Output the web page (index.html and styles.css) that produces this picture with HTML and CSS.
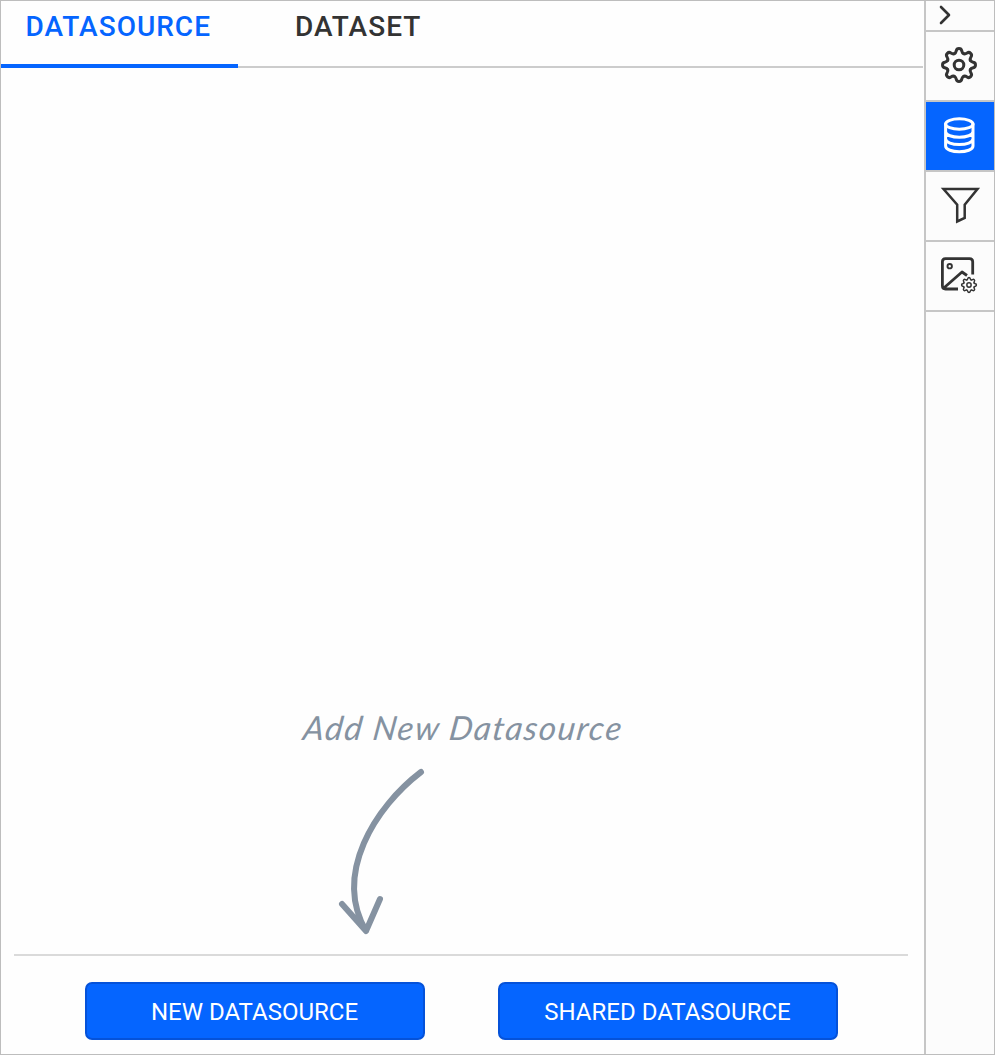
FILE: index.html
```html
<!DOCTYPE html>
<html lang="en">
<head>
<meta charset="utf-8">
<title>Datasource</title>
<link rel="stylesheet" href="styles.css">
</head>
<body>
<div class="app">
  <main class="panel">
    <nav class="tabs">
      <a class="tab tab-active">DATASOURCE</a>
      <a class="tab">DATASET</a>
    </nav>
    <section class="empty">
      <svg class="hint" width="340" height="250" viewBox="0 0 340 250">
        <text class="hint-text" transform="translate(11 44) skewX(-8)" textLength="318" lengthAdjust="spacing">Add New Datasource</text>
        <path class="arrow" d="M130 76C84 111 42 178 75 235M51 208L75 235L89 203"/>
      </svg>
    </section>
    <footer class="actions">
      <button class="btn">NEW DATASOURCE</button>
      <button class="btn">SHARED DATASOURCE</button>
    </footer>
  </main>
  <aside class="rail">
    <div class="cell cell-toggle">
      <svg class="icon" width="68" height="29" viewBox="0 0 68 29"><path stroke-width="2.6" d="M15 6L23 14L15 22"/></svg>
    </div>
    <div class="cell">
      <svg class="icon" width="68" height="68" viewBox="0 0 68 68">
        <defs>
          <path id="tooth" d="M-4.7-11.3C-3.2-11.9-3-13-2.7-14.3C-2.2-17.2 2.2-17.2 2.7-14.3C3-13 3.2-11.9 4.7-11.3"/>
          <g id="gear">
            <use href="#tooth"/><use href="#tooth" transform="rotate(45)"/><use href="#tooth" transform="rotate(90)"/><use href="#tooth" transform="rotate(135)"/>
            <use href="#tooth" transform="rotate(180)"/><use href="#tooth" transform="rotate(225)"/><use href="#tooth" transform="rotate(270)"/><use href="#tooth" transform="rotate(315)"/>
            <circle r="4.8"/>
          </g>
        </defs>
        <use href="#gear" transform="translate(33 33)" stroke-width="3"/>
      </svg>
    </div>
    <div class="cell cell-active">
      <svg class="icon" width="68" height="68" viewBox="0 0 68 68" stroke-width="3">
        <ellipse cx="33.3" cy="22" rx="13.7" ry="5.2"/>
        <path d="M19.6 22V44C19.6 51.6 47 51.6 47 44V22M19.6 29.5C19.6 37.1 47 37.1 47 29.5M19.6 36.8C19.6 44.4 47 44.4 47 36.8"/>
      </svg>
    </div>
    <div class="cell">
      <svg class="icon" width="68" height="68" viewBox="0 0 68 68" stroke-width="2.5">
        <path stroke-linejoin="miter" d="M17.5 17H51.5L38.7 32.7V46L31.2 49.5V32.7Z"/>
      </svg>
    </div>
    <div class="cell">
      <svg class="icon" width="68" height="68" viewBox="0 0 68 68" stroke-width="2.8">
        <path stroke-linecap="butt" d="M32 47H19.5Q16.4 47 16.4 43.8V19.8Q16.4 16.7 19.5 16.7H43.5Q46.7 16.7 46.7 19.8V32.5M17.5 46.3L36 30L41 33.5"/>
        <circle cx="23.7" cy="24.2" r="2.2" stroke-width="1.9"/>
        <use href="#gear" transform="translate(43 43) scale(.45)" stroke-width="3.2"/>
      </svg>
    </div>
  </aside>
</div>
</body>
</html>
```

FILE: styles.css
```css
* { box-sizing: border-box; }
body { margin: 0; font-family: Roboto, "Liberation Sans", sans-serif; background: #fff; }
.app { display: flex; width: 995px; height: 1055px; border: 1px solid #bdbdbd; }
.panel { flex: 1; display: flex; flex-direction: column; background: #fefefe; }
.tabs { display: flex; height: 67px; margin-right: 1px; border-bottom: 2px solid #ccc; }
.tab { height: 67px; padding: 9px 25px 0; font-size: 28px; line-height: 33px; font-weight: 500; letter-spacing: 1px; color: #333; }
.tab-active { width: 237px; margin-right: 32px; padding-left: 24.5px; color: #0565ff; border-bottom: 4px solid #0565ff; }
.empty { flex: 1; display: flex; align-items: flex-end; padding: 0 0 8px 290px; }
.hint { display: block; }
.hint-text { font-family: Lato, cursive; font-size: 33px; font-style: italic; fill: #8592a1; }
.arrow { fill: none; stroke: #8592a1; stroke-width: 6; stroke-linecap: round; stroke-linejoin: round; }
.actions { display: flex; gap: 73px; height: 100px; margin: 0 16px 0 13px; padding: 26px 0 0 71px; border-top: 2px solid #dadada; }
.btn { width: 340px; height: 58px; padding: 2px 1px 0 0; font: 400 24px/28px Roboto, "Liberation Sans", sans-serif; color: #fff; background: #0565ff; border: 2px solid #0552d9; border-radius: 7px; }
.rail { width: 70px; border-left: 2px solid #c6c6c6; background: #fcfcfc; }
.cell { height: 70px; border-bottom: 2px solid #c6c6c6; color: #333; }
.cell-toggle { height: 31px; }
.cell-active { background: #0565ff; color: #fff; }
.icon { display: block; fill: none; stroke: currentColor; stroke-linecap: round; stroke-linejoin: round; }
```
